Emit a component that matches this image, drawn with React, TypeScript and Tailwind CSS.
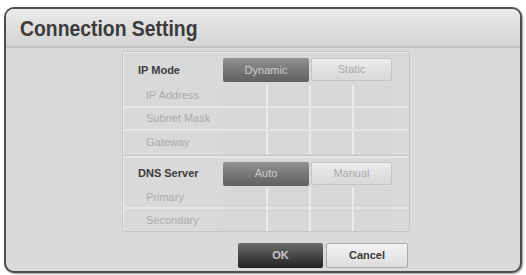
const sans = "font-['Liberation_Sans',Arial,sans-serif]"

function Cells() {
  return (
    <div className="flex h-full w-[169px]">
      {[43, 43, 43, 40].map((w, i) => (
        <div
          key={i}
          style={{ width: w }}
          className={`h-full bg-[#d7d7d7] ${i > 0 ? "border-l-2 border-[#ebebeb]" : ""}`}
        />
      ))}
    </div>
  )
}

function InputRow({ label, h, last }: { label: string; h: "h-[23px]" | "h-[22px]"; last?: boolean }) {
  return (
    <div className={`flex ${h} items-stretch ${last ? "" : "border-b-2 border-[#e6e6e6]"}`}>
      <div className={`flex w-[100px] items-center pl-[23px] text-[11px] text-[#ababab] ${sans}`}>
        {label}
      </div>
      <Cells />
    </div>
  )
}

function Toggle({ label, on, off, h }: { label: string; on: string; off: string; h: string }) {
  return (
    <div className={`flex ${h} items-center`}>
      <div className={`w-[100px] pl-[15px] text-[11px] font-bold text-[#3c3c3c] ${sans}`}>{label}</div>
      <div className="flex gap-[2px]">
        <div
          className={`flex h-[24px] w-[86px] items-center justify-center rounded-[2px] bg-gradient-to-b from-[#929292] to-[#5f5f5f] text-[11px] text-[#cdcdcd] ${sans}`}
        >
          {on}
        </div>
        <div
          className={`flex h-[23px] w-[81px] items-center justify-center rounded-[2px] border border-[#c4c4c4] bg-gradient-to-b from-[#ececec] to-[#d8d8d8] text-[11px] text-[#a8a8a8] ${sans}`}
        >
          {off}
        </div>
      </div>
    </div>
  )
}

export default function App() {
  return (
    <div className="h-[275px] w-[526px] bg-white pl-[4px] pt-[7px]">
      <div className="flex h-[266px] w-[518px] flex-col overflow-hidden rounded-[10px] border-2 border-[#4d4d4d] bg-[#dadada] shadow-[1px_1px_2px_rgba(0,0,0,0.4)]">
        {/* Header */}
        <div className="flex h-[39px] shrink-0 items-end border-b-2 border-[#c2c2c2] bg-gradient-to-b from-[#eaeaea] to-[#d4d4d4] pb-[3px] pl-[14px]">
          <h1
            className={`origin-left scale-x-[0.88] whitespace-nowrap text-[22px] font-bold leading-[28px] text-[#3a3a3a] ${sans}`}
          >
            Connection Setting
          </h1>
        </div>

        {/* Body */}
        <div className="flex flex-1 flex-col pl-[116px] pt-[3px]">
          <div className="w-[288px] rounded-[2px] border border-[#c6c6c6] bg-[#d9d9d9] shadow-[inset_1px_1px_0_#e8e8e8]">
            <div className="pb-[1px] pt-[3px]">
              <Toggle label="IP Mode" on="Dynamic" off="Static" h="h-[30px]" />
              <InputRow label="IP Address" h="h-[23px]" />
              <InputRow label="Subnet Mask" h="h-[23px]" />
              <InputRow label="Gateway" h="h-[23px]" last />
            </div>
            <div className="h-[3px] border-t border-[#c4c4c4] bg-[#e6e6e6]" />
            <div className="pt-[2px]">
              <Toggle label="DNS Server" on="Auto" off="Manual" h="h-[27px]" />
              <InputRow label="Primary" h="h-[22px]" />
              <InputRow label="Secondary" h="h-[22px]" last />
            </div>
          </div>

          <div className="mt-[11px] flex gap-[3px] pl-[116px]">
            <button
              className={`h-[25px] w-[85px] rounded-[2px] bg-gradient-to-b from-[#6e6e6e] to-[#232323] text-[11px] font-bold text-[#c8c8c8] ${sans}`}
            >
              OK
            </button>
            <button
              className={`h-[25px] w-[82px] rounded-[2px] border border-[#a9a9a9] bg-gradient-to-b from-[#f4f4f4] to-[#dcdcdc] text-[11px] font-bold text-[#3a3a3a] ${sans}`}
            >
              Cancel
            </button>
          </div>
        </div>
      </div>
    </div>
  )
}
